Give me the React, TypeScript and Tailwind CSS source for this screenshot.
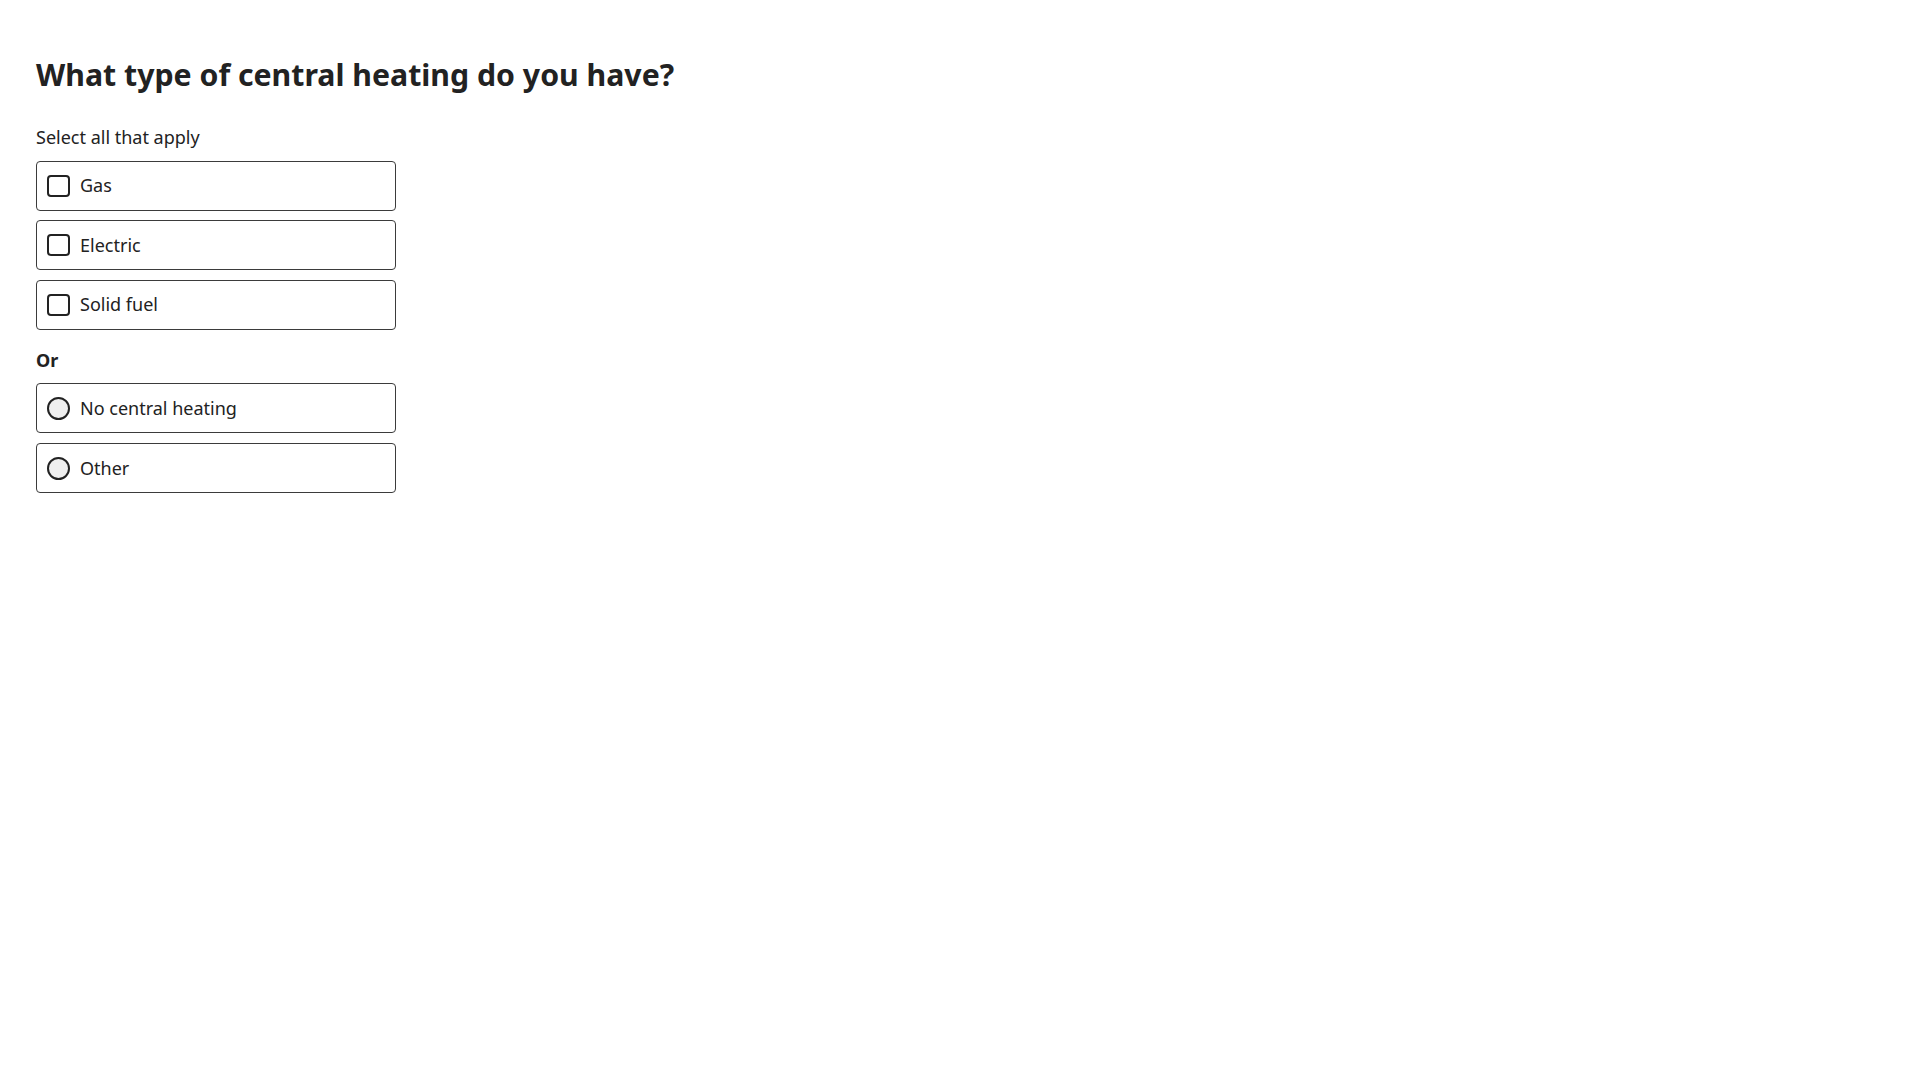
import React from "react";

const checkOptions = ["Gas", "Electric", "Solid fuel"];
const radioOptions = ["No central heating", "Other"];

const OptionBox: React.FC<{ label: string; kind: "check" | "radio" }> = ({ label, kind }) => (
  <label className="flex items-center h-[50px] w-[360px] border border-[#3b3b3b] rounded-[4px] pl-[10px] gap-[10px] bg-white">
    {kind === "check" ? (
      <span className="w-[23px] h-[22px] border-2 border-[#222] rounded-[4px] bg-white" />
    ) : (
      <span className="w-[23px] h-[23px] border-2 border-[#222] rounded-full bg-[#efefef]" />
    )}
    <span className="text-[18px] leading-[27px] text-[#222]">{label}</span>
  </label>
);

export default function App() {
  return (
    <div
      className="min-h-screen bg-white pt-[57px] pl-[36px] text-[#222]"
      style={{ fontFamily: '"Noto Sans", sans-serif' }}
    >
      <h1 className="text-[30.25px] leading-[36px] font-bold">What type of central heating do you have?</h1>

      {/* checkboxes */}
      <p className="mt-[30.5px] text-[18px] leading-[27px]">Select all that apply</p>
      <div className="mt-[10px] flex flex-col gap-[9.5px]">
        {checkOptions.map((o) => (
          <OptionBox key={o} label={o} kind="check" />
        ))}
      </div>

      {/* radios */}
      <p className="mt-[17.5px] text-[18px] leading-[27px] font-bold">Or</p>
      <div className="mt-[9px] flex flex-col gap-[10px]">
        {radioOptions.map((o) => (
          <OptionBox key={o} label={o} kind="radio" />
        ))}
      </div>
    </div>
  );
}
